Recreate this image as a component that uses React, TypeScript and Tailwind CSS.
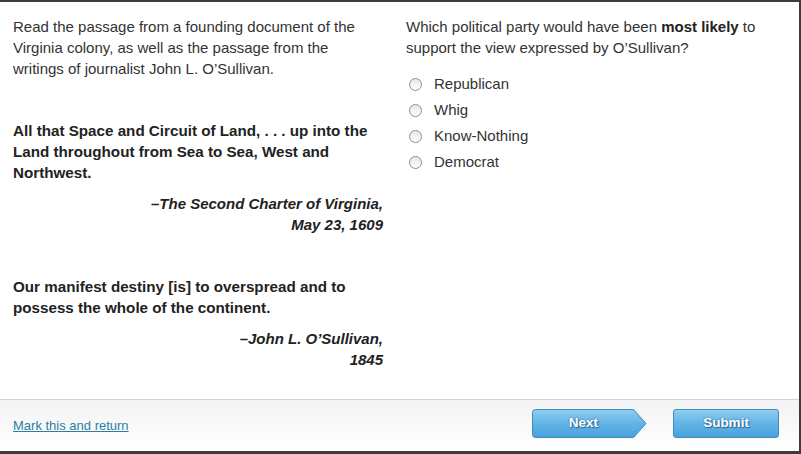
import React from "react";

const options = ["Republican", "Whig", "Know-Nothing", "Democrat"];

function NextShape() {
  return (
    <svg className="absolute inset-0" width="115" height="29" viewBox="0 0 115 29">
      <defs>
        <linearGradient id="nb" x1="0" y1="0" x2="0" y2="1">
          <stop offset="0" stopColor="#8fcdf0" />
          <stop offset="0.5" stopColor="#62b4e6" />
          <stop offset="1" stopColor="#4aa2dc" />
        </linearGradient>
      </defs>
      <path
        d="M3.5 0.5 H101.5 L114 14.5 L101.5 28.5 H3.5 Q0.5 28.5 0.5 25.5 V3.5 Q0.5 0.5 3.5 0.5 Z"
        fill="url(#nb)"
        stroke="#3d8cc4"
      />
    </svg>
  );
}

export default function App() {
  return (
    <div
      className="flex h-[454px] w-[801px] flex-col border-t-2 border-r-2 border-b-[3px] border-[#3c3c3c] bg-white text-[15px] text-[#333]"
      style={{ fontFamily: '"Liberation Sans", Arial, sans-serif' }}
    >
      <div className="flex flex-1 pt-[14px]">
        <div className="w-[393px] pl-[13px] pr-[10px]">
          <p className="leading-[21px]">
            Read the passage from a founding document of the Virginia colony, as well as the passage from the
            writings of journalist John L. O’Sullivan.
          </p>
          <div className="mt-[41px] text-[15.2px] font-bold leading-[21px] text-[#222]">
            <p>All that Space and Circuit of Land, . . . up into the Land throughout from Sea to Sea, West and Northwest.</p>
            <p className="mt-[10px] text-right text-[15px] italic">
              –The Second Charter of Virginia,
              <br />
              May 23, 1609
            </p>
          </div>
          <div className="mt-[41px] text-[15.2px] font-bold leading-[21px] text-[#222]">
            <p>Our manifest destiny [is] to overspread and to possess the whole of the continent.</p>
            <p className="mt-[10px] text-right text-[15px] italic">
              –John L. O’Sullivan,
              <br />
              1845
            </p>
          </div>
        </div>
        <div className="flex-1 pl-[13px] pr-[10px]">
          <p className="leading-[21px]">
            Which political party would have been <b className="text-[#222]">most likely</b> to support the view
            expressed by O’Sullivan?
          </p>
          <div className="mt-[13px] flex flex-col">
            {options.map((o) => (
              <label key={o} className="flex h-[26px] items-center">
                <span className="ml-[3px] h-[13px] w-[13px] rounded-full border border-[#8e8e8e] bg-gradient-to-b from-[#e6e6e6] to-white" />
                <span className="ml-[12px] text-[15px] text-[#333]">{o}</span>
              </label>
            ))}
          </div>
        </div>
      </div>
      <div className="flex h-[52px] items-center border-t border-[#d4d4d4] bg-gradient-to-b from-[#f3f3f3] to-white pl-[13px] pr-[20px]">
        <a href="#" className="text-[13px] text-[#2a7fa3] underline">
          Mark this and return
        </a>
        <div className="mb-[5px] ml-auto flex items-center gap-[26px]">
          <button className="relative h-[29px] w-[115px] text-[13.5px] font-bold text-white [text-shadow:0_0_2px_#2a6a99,1px_1px_1px_#2a6a99]">
            <NextShape />
            <span className="relative pr-[12px]">Next</span>
          </button>
          <button className="h-[29px] w-[106px] rounded-[3px] border border-[#3d8cc4] bg-gradient-to-b from-[#8fcdf0] via-[#62b4e6] to-[#4aa2dc] text-[13.5px] font-bold text-white [text-shadow:0_0_2px_#2a6a99,1px_1px_1px_#2a6a99]">
            Submit
          </button>
        </div>
      </div>
    </div>
  );
}
